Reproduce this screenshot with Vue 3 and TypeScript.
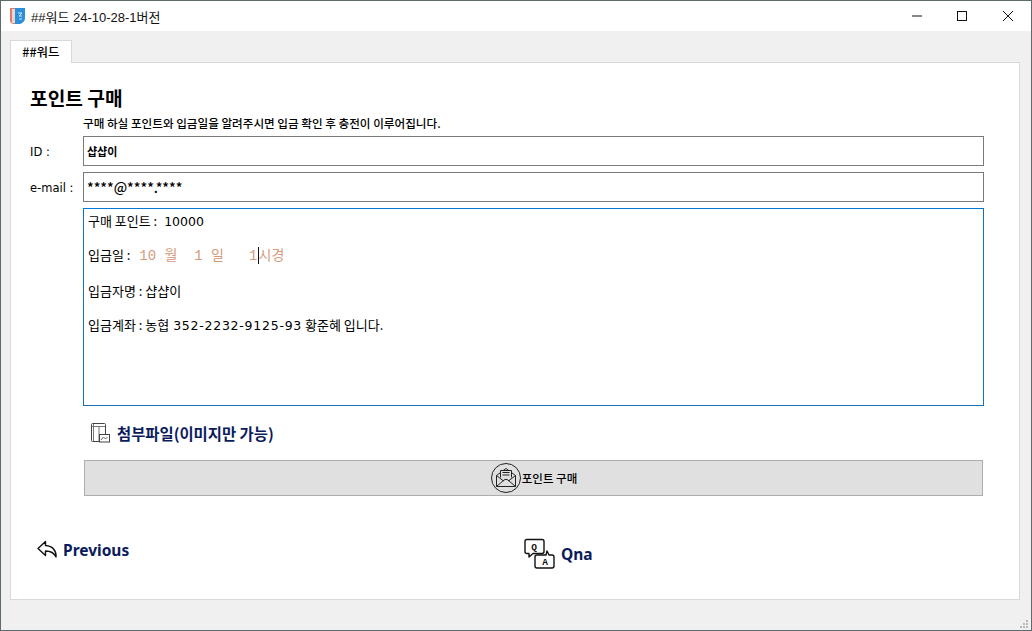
<script setup lang="ts">
const depositor = '입금자명 : 샵샵이'
const account = '352-2232-9125-93'
</script>

<template>
  <div class="window">
    <header class="titlebar">
      <svg class="appicon" width="16" height="18" viewBox="0 0 16 18">
        <path d="M0 1h5v16H3q-3-1-3-3z" fill="#e27a6a" />
        <path d="M2 2h3v14H2z" fill="#ead6cf" />
        <path d="M5 1h10v10q0 4-5 6H5z" fill="#2b90dc" />
        <path d="M8 6h4l-3 3h3M9 12h3" fill="none" stroke="#cfe9fa" stroke-width="1" />
      </svg>
      <span class="wintitle">##워드 24-10-28-1버전</span>
      <div class="controls">
        <svg width="46" height="30" viewBox="0 0 46 30"><path d="M19 15h10" stroke="#111" /></svg>
        <svg width="46" height="30" viewBox="0 0 46 30"><rect x="18.500" y="10.500" width="9" height="9" fill="none" stroke="#111" /></svg>
        <svg width="46" height="30" viewBox="0 0 46 30"><path d="M18 10l10 10M28 10l-10 10" stroke="#111" /></svg>
      </div>
    </header>

    <div class="client">
      <div class="tabstrip"><div class="tab">##워드</div></div>
      <main class="pane">
        <h1>포인트 구매</h1>
        <p class="hint">구매 하실 포인트와 입금일을 알려주시면 입금 확인 후 충전이 이루어집니다.</p>

        <div class="row">
          <label>ID :</label>
          <div class="field strong">샵샵이</div>
        </div>
        <div class="row">
          <label>e-mail :</label>
          <div class="field">****@****.****</div>
        </div>
        <div class="row">
          <span></span>
          <div class="memo">
            <p class="m1">구매 포인트 : <span class="plain">10000</span></p>
            <p class="m2">입금일 : <span class="date">10 월&nbsp;&nbsp;1 일&nbsp;&nbsp;&nbsp;1<i class="caret"></i>시경</span></p>
            <p class="m3">{{ depositor }}</p>
            <p class="m4">입금계좌 : 농협 <span class="plain num">{{ account }}</span> 황준혜 입니다.</p>
          </div>
        </div>

        <div class="attach">
          <svg width="20" height="22" viewBox="0 0 20 22" fill="none" stroke="#444">
            <rect x="1.500" y="1.500" width="14" height="18" rx="1" />
            <path d="M3.500 2v17M1.500 4.500h14M9 5v14" stroke="#777" />
            <rect x="9.500" y="12.500" width="10" height="7.500" fill="#fff" />
            <path d="M11 18l2.500-3 2 2 2-2" stroke-width=".8" />
          </svg>
          <span>첨부파일(이미지만 가능)</span>
        </div>

        <button class="buy">
          <svg width="32" height="32" viewBox="0 0 32 32" fill="none" stroke="#222">
            <circle cx="16" cy="16" r="14.500" />
            <path d="M6.500 13.500L16 6.500l9.500 7V24.500h-19z" />
            <path d="M6.500 13.500L13.500 19M25.500 13.500L18.500 19M6.500 24.500L14 18q2-1.500 4 0l7.500 6.500" />
            <rect x="10" y="8.500" width="12" height="7" fill="#e0e0e0" stroke="none" />
            <path d="M10.500 15.500V8.500h11v7M12.500 10.500h7M12.500 13h7" />
          </svg>
          <span>포인트 구매</span>
        </button>

        <nav class="links">
          <a class="prev">
            <svg width="22" height="20" viewBox="0 0 22 20" fill="none" stroke="#111" stroke-width="1.400" stroke-linejoin="round">
              <path d="M9.500 1.500L2 8.500l7.500 7v-4.500c5 0 8.500 1.500 10.500 6 .5-6-3-11-10.500-11.500z" />
            </svg>
            <span>Previous</span>
          </a>
          <a class="qna">
            <svg width="31" height="32" viewBox="0 0 31 32" fill="none" stroke="#111" stroke-width="1.400" stroke-linejoin="round">
              <path d="M3 1.500h15q2 0 2 2v10q0 2-2 2H9l-4 3.500v-3.500H3q-2 0-2-2v-10q0-2 2-2z" />
              <path d="M13 17h9l1-4 2 4h3q2 0 2 2v9q0 2-2 2H13q-2 0-2-2v-9q0-2 2-2z" fill="#fff" />
              <text x="7.300" y="12" class="qa">Q</text>
              <text x="18.300" y="27" class="qa">A</text>
            </svg>
            <span>Qna</span>
          </a>
        </nav>
      </main>
      <svg class="grip" width="8" height="8" viewBox="0 0 8 8" fill="#b8b8b8">
        <path d="M6 0h2v2H6zM3 3h2v2H3zM6 3h2v2H6zM0 6h2v2H0zM3 6h2v2H3zM6 6h2v2H6z" />
      </svg>
    </div>
  </div>
</template>

<style>
html, body { margin: 0; padding: 0; }
</style>

<style scoped>
.window {
  width: 1032px;
  height: 631px;
  box-sizing: border-box;
  border: 1px solid #5c6c6c;
  background: #f0f0f0;
  display: flex;
  flex-direction: column;
  font-family: "Noto Sans CJK KR", "Noto Sans", sans-serif;
  color: #000;
  overflow: hidden;
}
.titlebar {
  height: 30px;
  flex: none;
  background: #fff;
  display: flex;
  align-items: center;
  padding-left: 9px;
  gap: 5px;
}
.appicon { flex: none; }
.wintitle { font-family: "Liberation Sans", "Noto Sans CJK KR", sans-serif; font-size: 13px; color: #111; }
.controls { margin-left: auto; display: flex; }
.controls svg { display: block; }
.client { flex: 1; position: relative; padding: 0 11px 0 9px; display: flex; flex-direction: column; min-height: 0; }
.tabstrip { height: 31px; flex: none; display: flex; align-items: flex-end; box-sizing: border-box; }
.tab {
  width: 62px;
  height: 23px;
  box-sizing: border-box;
  background: #fff;
  border: 1px solid #d9d9d9;
  border-bottom: none;
  font-size: 12.500px;
  font-weight: 500;
  line-height: 21px;
  text-align: center;
  position: relative;
  top: 1px;
  z-index: 1;
}
.pane {
  height: 538px;
  flex: none;
  box-sizing: border-box;
  background: #fff;
  border: 1px solid #d9d9d9;
  padding: 21px 35px 0 19px;
  display: flex;
  flex-direction: column;
}
h1 { margin: 0; font-size: 19.200px; line-height: 28px; font-weight: 700; }
.hint { margin: 3px 0 6px 53px; font-size: 11.600px; font-weight: 500; line-height: 17px; height: 15px; }
.row { display: grid; grid-template-columns: 53px 901px; margin-bottom: 6px; }
.row label { font-family: "DejaVu Sans", "Noto Sans", sans-serif; font-size: 11.500px; font-weight: 400; align-self: center; line-height: 16px; padding-top: 2px; }
.field {
  height: 30px;
  box-sizing: border-box;
  border: 1px solid #7a7a7a;
  padding-left: 3px;
  font-size: 13.800px;
  line-height: 29px;
  font-weight: 500;
}
.field.strong { font-weight: 700; font-size: 11px; }
.memo {
  height: 198px;
  box-sizing: border-box;
  border: 1px solid #1670b5;
  border-top-color: #0078d7;
  padding: 0 4px;
  font-size: 13px;
  font-family: "Noto Sans CJK KR", sans-serif;
}
.memo p { margin: 0; line-height: 18px; }
.m1 { padding-top: 3px; }
.m2 { padding-top: 15px; }
.m3 { padding-top: 17px; }
.m4 { padding-top: 16px; }
.plain { font-family: "DejaVu Sans", sans-serif; font-size: 12.500px; margin-left: 4px; }
.num { letter-spacing: .75px; margin-left: 1px; }
.date { font-family: "Liberation Mono", "Noto Sans CJK KR", monospace; font-size: 14px; color: #d59a7c; margin-left: 6px; }
.caret { display: inline-block; width: 1px; height: 17px; background: #111; vertical-align: -4px; }
.attach {
  display: flex;
  align-items: center;
  gap: 7px;
  margin: 2px 0 0 60px;
  height: 38px;
  font-size: 15.400px;
  font-weight: 700;
  color: #0b1c5c;
}
.buy {
  margin: 8px 0 0 54px;
  width: 899px;
  height: 36px;
  flex: none;
  box-sizing: border-box;
  background: #e0e0e0;
  border: 1px solid #adadad;
  display: flex;
  align-items: center;
  justify-content: center;
  padding: 0;
  font-family: inherit;
  font-size: 11.500px;
  font-weight: 500;
  color: #000;
}
.links { display: flex; margin-top: 42px; padding-left: 6px; }
.links a { display: flex; align-items: center; font-size: 15.500px; font-weight: 700; color: #0b1c5c; font-family: "Noto Sans", sans-serif; }
.prev { gap: 5px; width: 488px; height: 32px; align-self: flex-start; margin-top: -4px; }
.qna { gap: 6px; height: 32px; }
.qa { font-family: "Liberation Mono", monospace; font-size: 9.500px; font-weight: 700; fill: #111; stroke: none; }
.grip { position: absolute; right: 3px; bottom: 2px; }
</style>
